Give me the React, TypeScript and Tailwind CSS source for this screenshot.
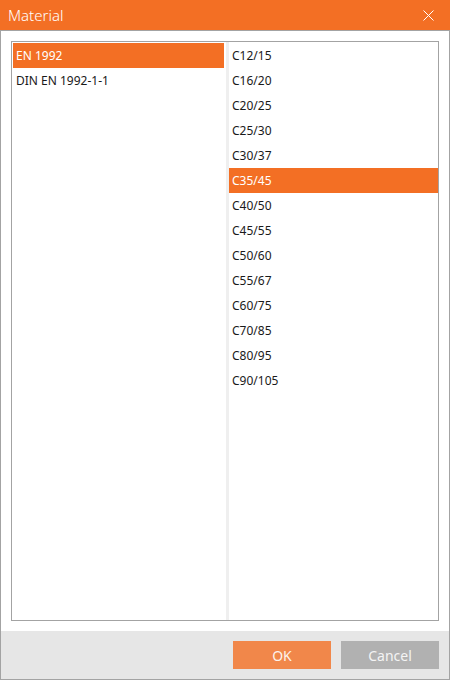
import React, { useState } from 'react';

const STANDARDS = ['EN 1992', 'DIN EN 1992-1-1'];
const GRADES = [
  'C12/15', 'C16/20', 'C20/25', 'C25/30', 'C30/37', 'C35/45', 'C40/50',
  'C45/55', 'C50/60', 'C55/67', 'C60/75', 'C70/85', 'C80/95', 'C90/105',
];

const font = { fontFamily: '"Segoe UI", "Noto Sans", sans-serif' };

const ListItem: React.FC<{ label: string; selected: boolean; onClick: () => void }> = ({ label, selected, onClick }) => (
  <div
    onClick={onClick}
    className={`h-[25px] pl-[3px] flex items-center text-[12px] leading-none cursor-default ${
      selected ? 'bg-[#f36f24] text-white' : 'text-[#1a1a1a]'
    }`}
  >
    {label}
  </div>
);

export default function App() {
  const [standard, setStandard] = useState('EN 1992');
  const [grade, setGrade] = useState('C35/45');

  return (
    <div className="w-[450px] h-[680px] flex flex-col bg-white select-none" style={font}>
      {/* title bar */}
      <div className="h-[30px] shrink-0 bg-[#f36f24] flex items-center justify-between pl-[8px] pr-[16px]">
        <span className="text-[15px] text-white font-light">Material</span>
        <svg width="11" height="11" viewBox="0 0 11 11" className="text-white">
          <path d="M0.5 0.5 L10.5 10.5 M10.5 0.5 L0.5 10.5" stroke="currentColor" strokeWidth="1" fill="none" />
        </svg>
      </div>

      <div className="flex-1 flex flex-col border border-[#a3a3a3]">
        {/* lists */}
        <div className="flex-1 p-[10px]">
          <div className="h-full border border-[#a3a3a3] flex">
            <div className="w-[214px] py-[1px] pl-[1px] pr-[2px]">
              {STANDARDS.map(s => (
                <ListItem key={s} label={s} selected={s === standard} onClick={() => setStandard(s)} />
              ))}
            </div>
            <div className="w-[3px] bg-[#efefef]" />
            <div className="flex-1 pt-[1px]">
              {GRADES.map(g => (
                <ListItem key={g} label={g} selected={g === grade} onClick={() => setGrade(g)} />
              ))}
            </div>
          </div>
        </div>

        {/* footer */}
        <div className="h-[48px] shrink-0 bg-[#e6e6e6] flex items-center justify-end gap-[10px] pr-[10px]">
          <button className="w-[98px] h-[28px] bg-[#f1874a] text-[#fdf3ec] text-[14px]">OK</button>
          <button className="w-[98px] h-[28px] bg-[#b1b1b1] text-[#f4f4f4] text-[14px]">Cancel</button>
        </div>
      </div>
    </div>
  );
}
